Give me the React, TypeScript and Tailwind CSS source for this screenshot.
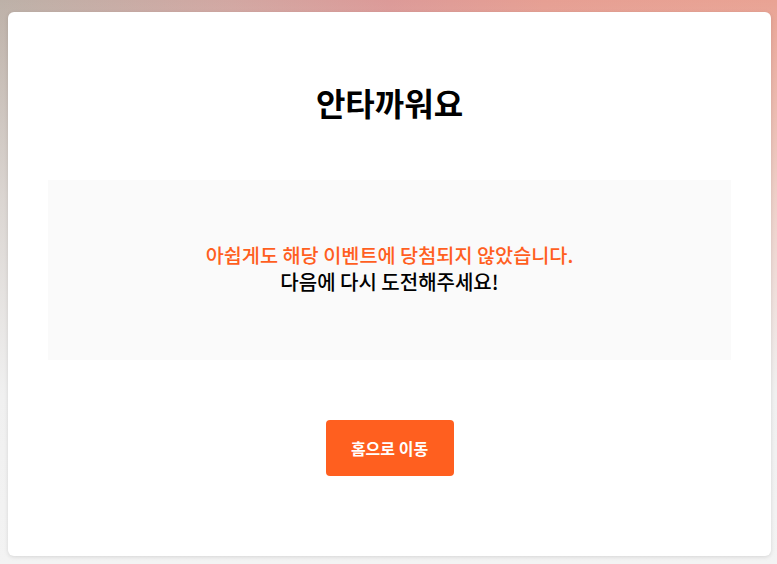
export default function App() {
  return (
    <div className="min-h-[564px] bg-[#f3f3f3] bg-[linear-gradient(to_bottom,rgba(243,243,243,0)_0%,rgba(243,243,243,0.55)_35%,#f0f0f0_70%,#f3f3f3_100%),linear-gradient(to_right,#bdb1a8_0%,#d2a7a2_30%,#dc9a98_50%,#e69f93_70%,#e9a394_100%)] pt-3 pb-2 pl-2 pr-[6px] font-['Noto_Sans_CJK_KR','Noto_Sans',sans-serif]">
      <div className="flex flex-col items-center rounded-md bg-white px-10 pt-[68px] pb-20 shadow-[0_1px_4px_rgba(0,0,0,0.12)]">
        <h1 className="h-[45px] text-[32px] font-semibold leading-[45px] text-black">안타까워요</h1>
        <div className="mt-[55px] flex h-[180px] w-full flex-col items-center justify-center bg-[#fafafa] pb-1 leading-[27px]">
          <p className="text-[19.7px] font-medium text-[#ff5f1f]">아쉽게도 해당 이벤트에 당첨되지 않았습니다.</p>
          <p className="text-[20px] font-medium text-black">다음에 다시 도전해주세요!</p>
        </div>
        <button className="mt-[60px] h-14 w-32 rounded bg-[#ff5f1f] text-[16px] font-bold text-white">
          홈으로 이동
        </button>
      </div>
    </div>
  );
}
